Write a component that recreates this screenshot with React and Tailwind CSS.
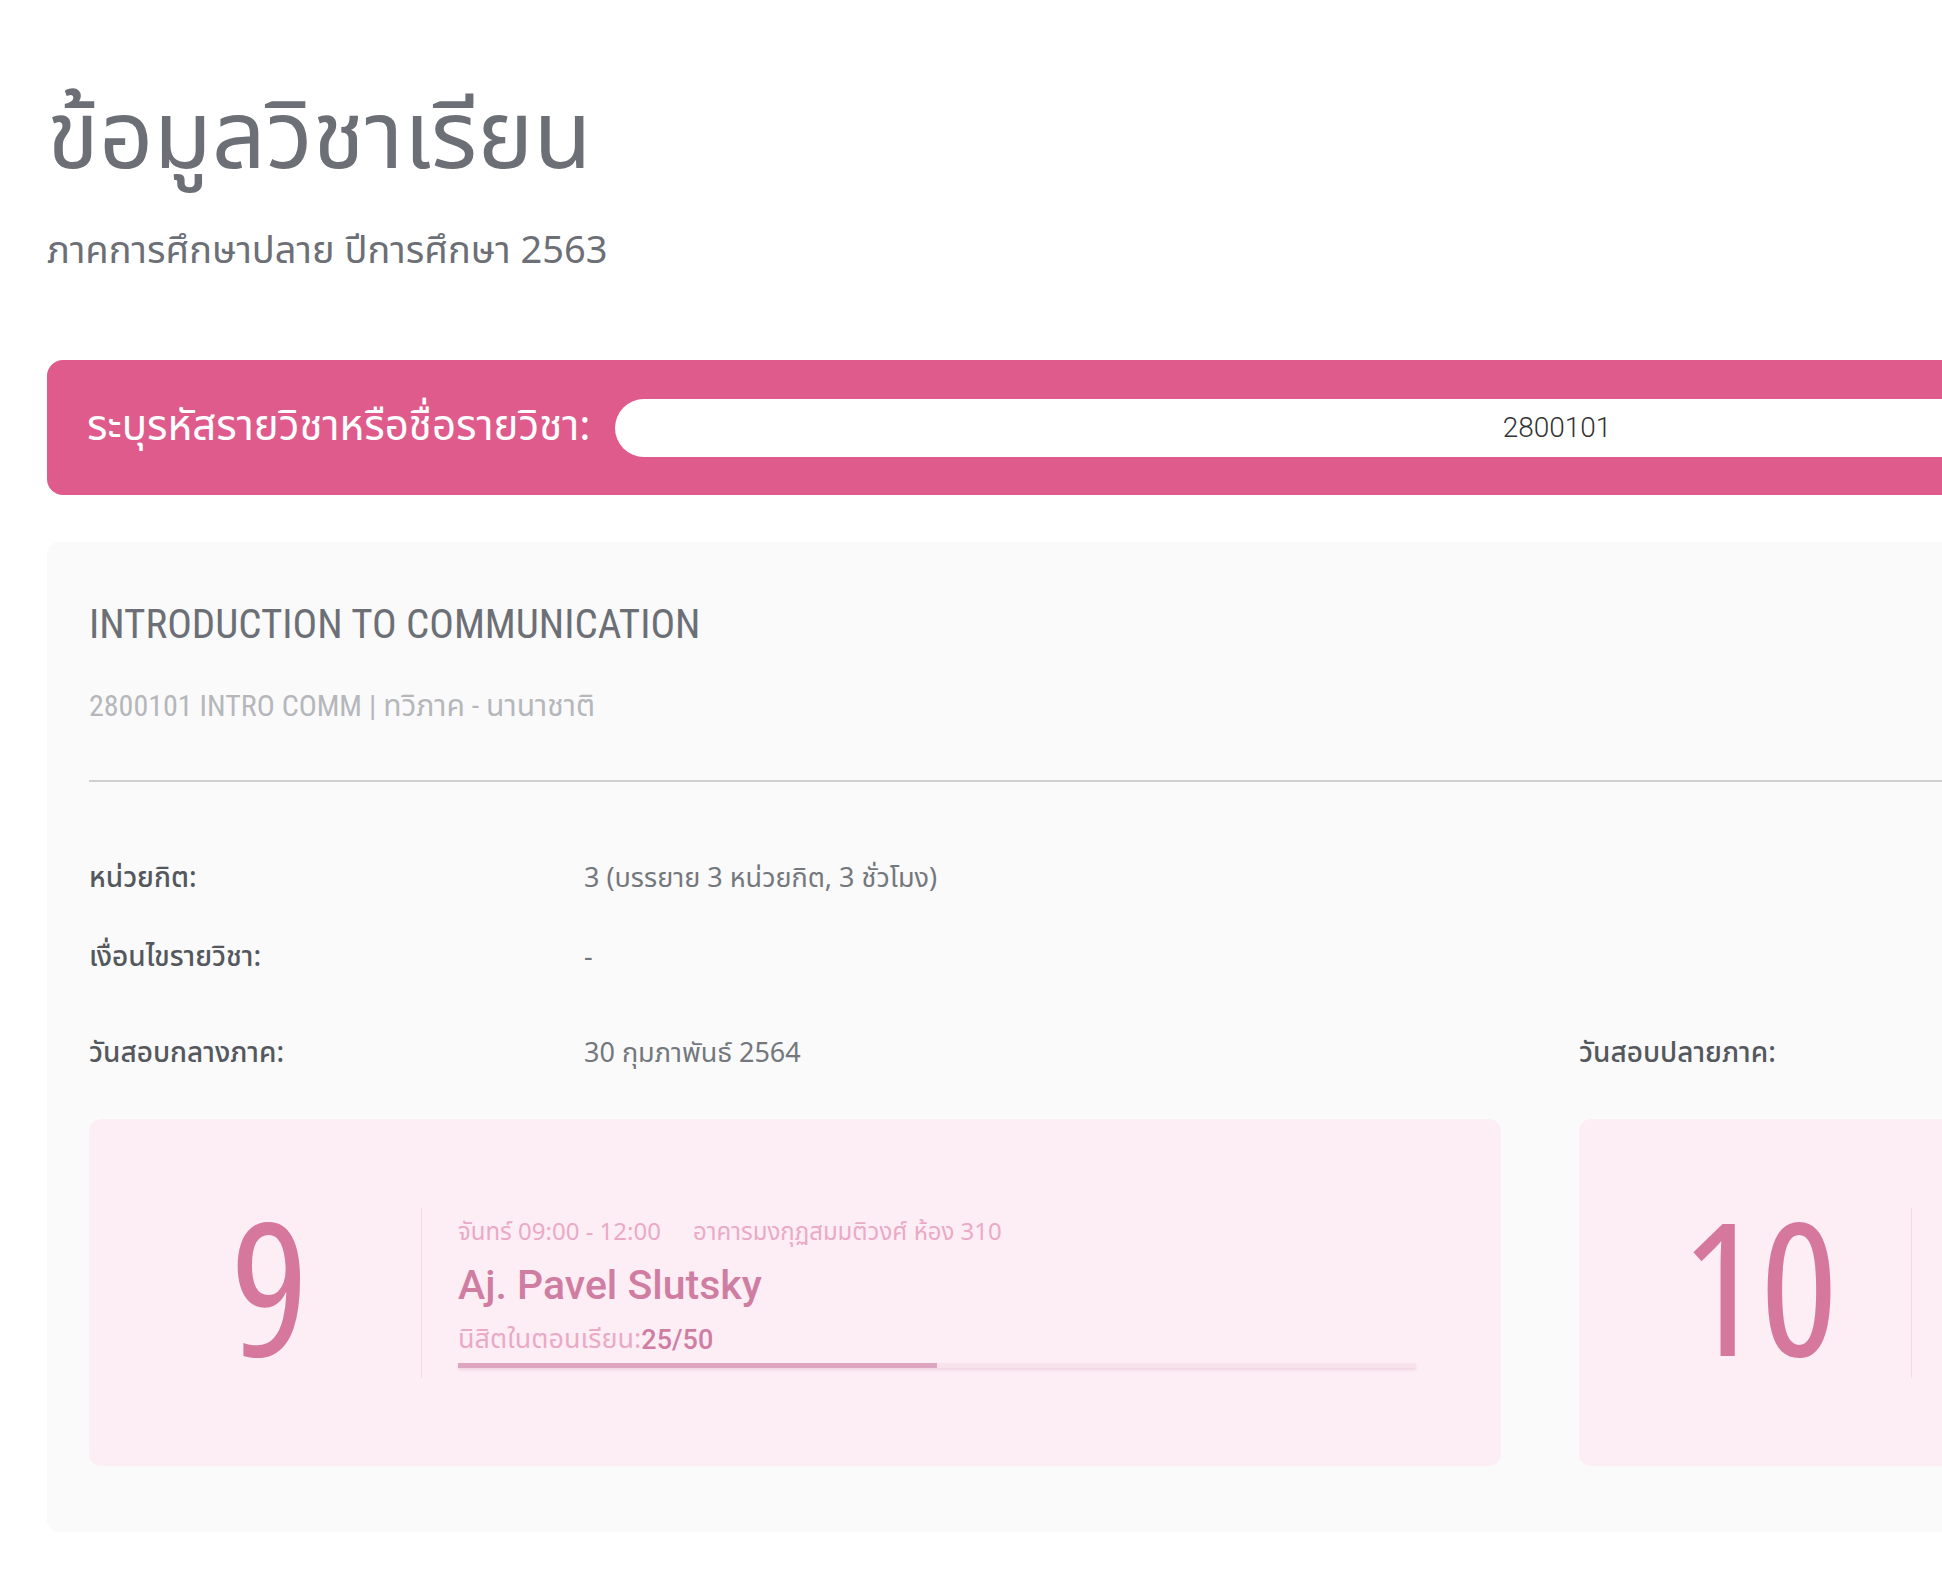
import React from 'react';

const sections = [
  {
    number: '9',
    time: 'จันทร์ 09:00 - 12:00',
    room: 'อาคารมงกุฏสมมติวงศ์ ห้อง 310',
    teacher: 'Aj. Pavel Slutsky',
    enrolled: 25,
    capacity: 50,
  },
  {
    number: '10',
    time: 'อังคาร 09:00 - 12:00',
    room: 'อาคารมงกุฏสมมติวงศ์ ห้อง 311',
    teacher: 'Aj. Pavel Slutsky',
    enrolled: 30,
    capacity: 50,
  },
];

const SectionCard = ({ section }) => {
  const pct = Math.round((section.enrolled / section.capacity) * 100);
  return (
    <div className="h-[347px] rounded-[12px] bg-[#fdeef5] flex items-center">
      <div className="w-[333px] h-[170px] border-r border-[#f3dbe6] flex items-center justify-center pl-[30px]">
        <span className="pb-[16px] text-[184px] leading-none text-[#d6789e] font-['Open_Sans',sans-serif] font-stretch-condensed">
          {section.number}
        </span>
      </div>
      <div className="flex-1 pl-[36px] pr-[85px]">
        <div className="h-[30px] flex items-center text-[24px] text-[#eaaac6] whitespace-nowrap">
          <span>{section.time}</span>
          <span className="ml-[32px]">{section.room}</span>
        </div>
        <div className="mt-[15px] h-[46px] flex items-center text-[41px] font-medium text-[#d07da2] font-['Roboto',sans-serif] whitespace-nowrap">
          {section.teacher}
        </div>
        <div className="mt-[17px] h-[30px] flex items-center text-[27px] whitespace-nowrap">
          <span className="text-[#eaaac6]">นิสิตในตอนเรียน:</span>
          <span className="text-[#d07da2] font-['Roboto',sans-serif] font-medium">
            {section.enrolled}/{section.capacity}
          </span>
        </div>
        <div className="mt-[7px] h-[5px] bg-[#f8e3ec] shadow-[0_2px_3px_rgba(220,160,185,0.35)]">
          <div className="h-full bg-[#dda5bf]" style={{ width: `${pct}%` }} />
        </div>
      </div>
    </div>
  );
};

const InfoRow = ({ label, value, className = '' }) => (
  <div className={`flex items-center ${className}`}>
    <span className="w-[495px] shrink-0 text-[28px] font-medium text-[#54585d] whitespace-nowrap">{label}</span>
    <span className="text-[27px] text-[#74787c] whitespace-nowrap">{value}</span>
  </div>
);

export default function App() {
  return (
    <div className="w-full min-h-screen bg-white overflow-hidden font-['Noto_Sans_Thai','Liberation_Sans',sans-serif]">
      <div className="w-[3080px] px-[47px] pt-[79px] pb-[40px]">
        {/* Page heading */}
        <h1 className="text-[95px] leading-[120px] text-[#6c6f75] font-normal font-stretch-condensed">
          ข้อมูลวิชาเรียน
        </h1>
        <p className="mt-[31px] text-[38px] leading-[44px] text-[#6c6f75] font-stretch-condensed">
          ภาคการศึกษาปลาย ปีการศึกษา 2563
        </p>

        {/* Search bar */}
        <div className="mt-[86px] h-[135px] rounded-[16px] bg-[#df5b8b] flex items-center pl-[40px] pr-[534px]">
          <span className="w-[528px] shrink-0 text-[42px] text-white whitespace-nowrap font-stretch-condensed">
            ระบุรหัสรายวิชาหรือชื่อรายวิชา:
          </span>
          <div className="flex-1 h-[58px] rounded-full bg-white flex items-center justify-center">
            <span className="text-[28px] font-light text-[#333] font-['Roboto',sans-serif]">2800101</span>
          </div>
        </div>

        {/* Course card */}
        <div className="mt-[47px] rounded-[12px] bg-[#fafafa] px-[42px] pt-[60px] pb-[66px]">
          <h2 className="text-[41px] leading-[44px] text-[#6c6f75] font-['Roboto',sans-serif] font-stretch-condensed">
            INTRODUCTION TO COMMUNICATION
          </h2>
          <p className="mt-[42px] text-[30px] leading-[36px] text-[#b5b7ba] font-['Roboto','Noto_Sans_Thai',sans-serif] font-stretch-condensed">
            2800101 INTRO COMM | ทวิภาค - นานาชาติ
          </p>
          <div className="mt-[56px] h-[2px] bg-[#cfd0d2]" />

          <div className="mt-[76px] flex flex-col">
            <InfoRow label="หน่วยกิต:" value="3 (บรรยาย 3 หน่วยกิต, 3 ชั่วโมง)" />
            <InfoRow className="mt-[37px]" label="เงื่อนไขรายวิชา:" value="-" />
            <div className="mt-[54px] grid grid-cols-2 gap-x-[78px]">
              <InfoRow label="วันสอบกลางภาค:" value="30 กุมภาพันธ์ 2564" />
              <InfoRow label="วันสอบปลายภาค:" value="10 พฤษภาคม 2564" />
            </div>
          </div>

          <div className="mt-[44px] grid grid-cols-2 gap-x-[78px]">
            {sections.map((s) => (
              <SectionCard key={s.number} section={s} />
            ))}
          </div>
        </div>
      </div>
    </div>
  );
}
